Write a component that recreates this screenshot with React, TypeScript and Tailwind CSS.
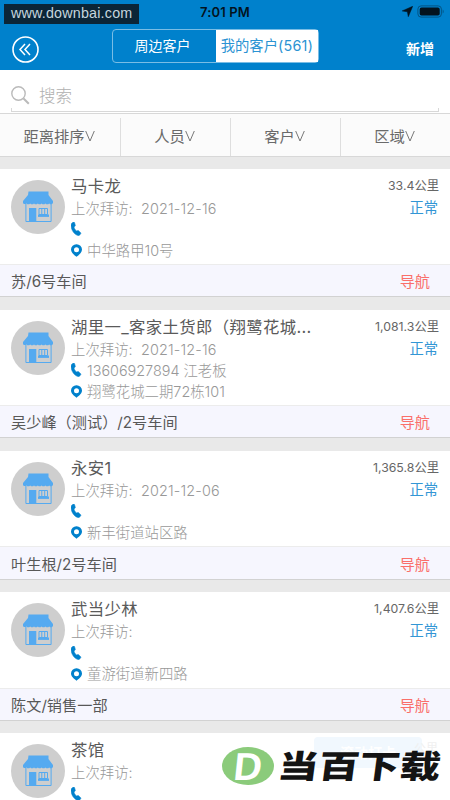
import { clsx } from "clsx";

type Customer = {
  name: string;
  lastVisit: string;
  phone: string;
  address: string;
  owner: string;
  distance: string;
};

const customers: Customer[] = [
  { name: "马卡龙", lastVisit: "2021-12-16", phone: "", address: "中华路甲10号", owner: "苏/6号车间", distance: "33.4公里" },
  {
    name: "湖里一_客家土货郎（翔鹭花城...",
    lastVisit: "2021-12-16",
    phone: "13606927894 江老板",
    address: "翔鹭花城二期72栋101",
    owner: "吴少峰（测试）/2号车间",
    distance: "1,081.3公里",
  },
  { name: "永安1", lastVisit: "2021-12-06", phone: "", address: "新丰街道站区路", owner: "叶生根/2号车间", distance: "1,365.8公里" },
  { name: "武当少林", lastVisit: "", phone: "", address: "童游街道新四路", owner: "陈文/销售一部", distance: "1,407.6公里" },
  { name: "茶馆", lastVisit: "", phone: "", address: "", owner: "", distance: "" },
];

const filters = ["距离排序", "人员", "客户", "区域"];

function ShopIcon() {
  return (
    <svg viewBox="0 0 32 32" className="h-8 w-8" fill="none">
      <path
        d="M6.500.5h20v3.500l4.500 6v2c-1 1.600-2.600 1.600-3.800.4-1.200 1.200-2.600 1.200-3.800 0-1.200 1.200-2.600 1.200-3.800 0-1.200 1.200-2.600 1.200-3.800 0-1.200 1.200-2.600 1.200-3.800 0-1.200 1.200-2.600 1.200-3.800 0-1.200 1.200-2.600 1.200-3.800 0-1 1-2.900.9-3.400-.4v-2l5-6z"
        fill="#55aaf0"
      />
      <path d="M3.900 13v17.500h25.200V13" stroke="#55aaf0" />
      <path d="M7 17h7.300v13H7z" fill="#55aaf0" />
      <path d="M17 17.500h8.500v6H17zM19.800 17.500v6M22.700 17.500v6" stroke="#55aaf0" />
      <path d="M16 23.500h11v2.400H16z" fill="#55aaf0" />
    </svg>
  );
}

function PhoneIcon() {
  return (
    <svg viewBox="0 0 12 14" className="h-3.5 w-3 shrink-0">
      <path
        d="M1.300.7 2.600.1c.5-.1.800.1 1 .6l.7 2.500c.1.500 0 .8-.4 1.100l-.9.700c.3 1.600 1.300 3 2.700 4l1-.4c.4-.1.800 0 1.100.3l1.900 1.800c.3.400.3.700 0 1l-1.200 1.500c-.3.400-.8.500-1.300.4C3.500 12.800.3 8.500 0 3.600 0 2.300.4 1.300 1.300.7z"
        fill="#0081cc"
        stroke="#0081cc"
        strokeWidth=".5"
      />
    </svg>
  );
}

function PinIcon() {
  return (
    <svg viewBox="0 0 12 13" className="h-[13px] w-3 shrink-0">
      <path
        fillRule="evenodd"
        d="M5.500.2a5.400 5.400 0 0 1 5.500 5.400c0 3-2.600 4.900-5.500 7.200C2.600 10.500 0 8.600 0 5.600A5.400 5.400 0 0 1 5.500.2zm0 3a2.500 2.500 0 1 0 0 5 2.500 2.500 0 0 0 0-5z"
        fill="#0081cc"
      />
    </svg>
  );
}

function StatusBar() {
  return (
    <div className="relative flex h-6 items-center justify-center">
      <div className="absolute left-1 top-1 flex h-5 w-[135px] items-center bg-[#0b2537] pl-[7px] font-['Liberation_Sans'] text-[14.3px] leading-none tracking-[0.2px] text-[#c5d5de]">
        <span className="-mt-0.5">www.downbai.com</span>
      </div>
      <span className="font-['Inter'] text-[13px] font-semibold leading-none tracking-[0.15px] text-[#03131e]">7:01 PM</span>
      <div className="absolute right-[5px] top-[5px] flex items-center gap-1">
        <svg viewBox="0 0 11 11" className="h-[11px] w-[11px]">
          <path d="M10.700.3 6.300 10.700 5.400 5.800.2 4.900z" fill="#03131e" stroke="#03131e" strokeWidth=".5" />
        </svg>
        <svg viewBox="0 0 28 13" className="h-[13px] w-7">
          <rect x=".9" y=".9" width="23.500" height="11.200" rx="3.200" fill="none" stroke="#035484" />
          <rect x="2.700" y="2.600" width="20" height="8" rx="1.800" fill="#03131e" />
          <path d="M25.700 4.500c1.300.5 1.300 3.500 0 4z" fill="#035484" />
        </svg>
      </div>
    </div>
  );
}

function Header() {
  return (
    <header className="h-[70px] shrink-0 bg-[#0081cc]">
      <StatusBar />
      <div className="flex h-[46px] items-start pl-3 pr-4 text-white">
        <svg viewBox="0 0 27 27" className="mt-[11.500px] h-[27px] w-[27px]" fill="none" stroke="white">
          <circle cx="13.500" cy="13.500" r="12.500" strokeWidth="1.600" />
          <path d="m13 8-5 5.500 5 5.500M18 8l-5 5.500 5 5.500" strokeWidth="1.500" />
        </svg>
        <div className="ml-[73px] mt-[5px] flex h-[34px] w-[207px] rounded-sm border border-[#79bde5] text-[14px]">
          <span className="flex w-[103px] items-center justify-center pr-1 pb-0.5">周边客户</span>
          <span className="flex flex-1 items-center justify-center bg-white text-[14.3px] text-[#2b93d3]">
            我的客户<span className="tracking-[0.3px]">(561)</span>
          </span>
        </div>
        <span className="ml-auto mt-[15px] text-[14px] font-bold leading-5">新增</span>
      </div>
    </header>
  );
}

function SearchBox() {
  return (
    <div className="h-[43px] shrink-0 bg-white px-[11px]">
      <div className="flex h-[38px] items-center pt-3.5">
        <svg viewBox="0 0 20 20" className="h-5 w-5" fill="none" stroke="#bababa">
          <circle cx="7.500" cy="7.500" r="6.700" strokeWidth="1.400" />
          <path d="m12.500 12.500 5.300 5.300" strokeWidth="2" />
        </svg>
        <span className="ml-2 text-[16.500px] font-light text-[#b0b0b0]">搜索</span>
      </div>
      <div className="h-1 border-x border-b border-[#d8d8d8]" />
    </div>
  );
}

function CustomerCard({ customer, partial }: { customer: Customer; partial?: boolean }) {
  return (
    <article className={clsx("shrink-0", partial ? "h-[66px]" : "h-[141.200px]")}>
      <div className="flex h-[95.500px] bg-white px-[11px]">
        <div className="mt-[11px] flex h-[54px] w-[54px] shrink-0 items-center justify-center rounded-full bg-[#cecece]">
          <ShopIcon />
        </div>
        <div className="ml-1.5 w-0 flex-1 whitespace-nowrap font-light text-[#989898]">
          <p className="mt-[5px] h-6 text-[16.400px] font-normal leading-6 tracking-[0.35px] text-[#5a5a5a]">{customer.name}</p>
          <p className="flex h-[21px] text-[14.400px] leading-[21px]">
            <span className="w-[70px]">上次拜访:</span>
            <span className="tracking-[0.15px]">{customer.lastVisit}</span>
          </p>
          <p className="flex h-[21px] items-center gap-1 text-[14.400px] leading-[21px]">
            <PhoneIcon />
            {customer.phone}
          </p>
          <p className="flex h-[22px] items-center gap-1 text-[14.400px] leading-[22px]">
            <PinIcon />
            {customer.address}
          </p>
        </div>
        <div className="flex flex-col items-end">
          <span className="mt-2 h-[18px] text-[12.300px] leading-[18px] text-[#666]">{customer.distance}</span>
          <span className="mr-px mt-0.5 text-[14.300px] leading-[22px] text-[#3296d5]">{customer.distance && "正常"}</span>
        </div>
      </div>
      {!partial && (
        <>
          <div className="flex h-[33.200px] items-center justify-between border-y border-b-[#d2d2d2] border-t-[#ececec] bg-[#f6f6fe] pl-[11px] pr-5 pt-1 text-[15.200px] text-[#585858]">
            <span>{customer.owner}</span>
            <span className="text-[#fa6f6a]">导航</span>
          </div>
          <div className="h-[12.500px] bg-[#e9e9e9]" />
        </>
      )}
    </article>
  );
}

function Watermark() {
  return (
    <div className="absolute bottom-0 right-0 h-[66px] w-[229px] bg-white">
      <div className="absolute left-[93px] top-[3px] flex h-[31px] w-[108px] items-center justify-center rounded bg-[#f1f8fe] text-[14px] font-bold text-white">
        滚动打卡
      </div>
      <span className="absolute right-3 top-[6px] text-[12px] text-[#f0f0f0]">公里</span>
      <div className="absolute left-[1px] top-[13px] flex h-[38px] w-[52px] items-center justify-center rounded-[50%] bg-[#8bcb7b]">
        <span className="-skew-x-6 font-['Liberation_Sans'] text-[39px] font-bold leading-none text-white">D</span>
      </div>
      <div className="absolute left-[57px] top-[11px] origin-left -skew-x-6 scale-x-[1.270] whitespace-nowrap text-[32px] font-black leading-[44px] text-[#141414]">
        当百下载
      </div>
    </div>
  );
}

export default function App() {
  return (
    <div className="relative flex h-[800px] w-[450px] flex-col overflow-hidden bg-white font-['Inter','Noto_Sans_CJK_SC',sans-serif]">
      <Header />
      <SearchBox />
      <nav className="flex h-[43.500px] shrink-0 border-y border-[#d8d8d8] bg-[#fbfbfb] pt-1">
        {filters.map((label, i) => (
          <span
            key={label}
            className={clsx(
              "flex items-center justify-center pr-0.5 pt-0.5 text-[15.300px] text-[#6a6a6a]",
              i === 0 ? "w-[120px]" : "w-[110px] border-l border-[#dedede]"
            )}
          >
            {label}
            <svg viewBox="0 0 10 12" className="-mt-1 h-3 w-2.5" fill="none" stroke="#777">
              <path d="M.7 1 5 11 9.300 1" />
            </svg>
          </span>
        ))}
      </nav>
      <div className="h-3 shrink-0 bg-[#e9e9e9]" />
      {customers.map((customer) => (
        <CustomerCard key={customer.name} customer={customer} partial={!customer.owner} />
      ))}
      <Watermark />
    </div>
  );
}
